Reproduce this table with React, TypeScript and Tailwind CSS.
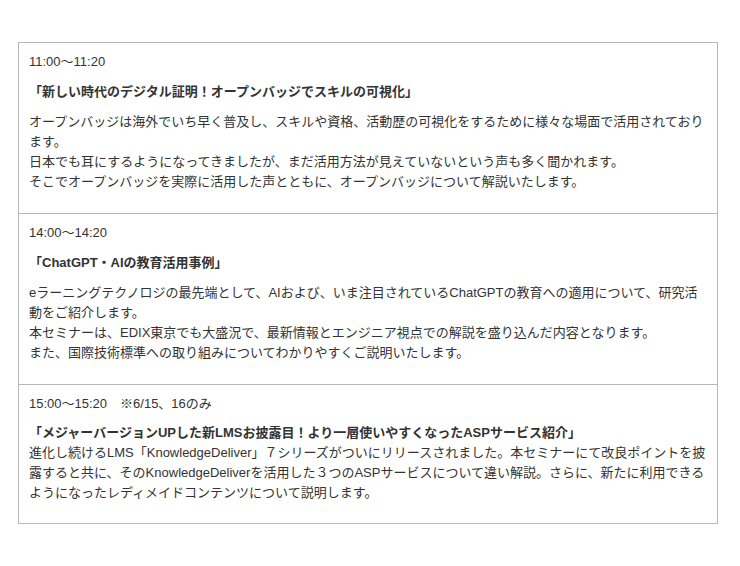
const sessions = [
  {
    time: "11:00〜11:20",
    title: "「新しい時代のデジタル証明！オープンバッジでスキルの可視化」",
    body: [
      "オープンバッジは海外でいち早く普及し、スキルや資格、活動歴の可視化をするために様々な場面で活用されております。",
      "日本でも耳にするようになってきましたが、まだ活用方法が見えていないという声も多く聞かれます。",
      "そこでオープンバッジを実際に活用した声とともに、オープンバッジについて解説いたします。",
    ],
    inline: false,
  },
  {
    time: "14:00〜14:20",
    title: "「ChatGPT・AIの教育活用事例」",
    body: [
      "eラーニングテクノロジの最先端として、AIおよび、いま注目されているChatGPTの教育への適用について、研究活動をご紹介します。",
      "本セミナーは、EDIX東京でも大盛況で、最新情報とエンジニア視点での解説を盛り込んだ内容となります。",
      "また、国際技術標準への取り組みについてわかりやすくご説明いたします。",
    ],
    inline: false,
  },
  {
    time: "15:00〜15:20　※6/15、16のみ",
    title: "「メジャーバージョンUPした新LMSお披露目！より一層使いやすくなったASPサービス紹介」",
    body: [
      "進化し続けるLMS「KnowledgeDeliver」７シリーズがついにリリースされました。本セミナーにて改良ポイントを披露すると共に、そのKnowledgeDeliverを活用した３つのASPサービスについて違い解説。さらに、新たに利用できるようになったレディメイドコンテンツについて説明します。",
    ],
    inline: true,
  },
];

export default function App() {
  return (
    <div
      className="min-h-[566px] w-[740px] bg-white pt-[42px] pl-[18px] text-[13px] leading-[20px] text-[#333]"
      style={{ fontFamily: '"Liberation Sans", "Noto Sans CJK JP", sans-serif' }}
    >
      <div className="w-[700px] border border-[#b8b8b8]">
        {sessions.map((s, i) => (
          <div
            key={s.time}
            className={`px-[10px] pt-[9px] ${i > 0 ? "border-t border-[#b8b8b8]" : ""} ${s.inline ? "pb-[10px]" : "pb-[11px]"}`}
          >
            <p className={s.inline ? "mb-[9px]" : "mb-[10px]"}>{s.time}</p>
            {s.inline ? (
              <p className="mb-[10px]">
                <span className="font-bold">{s.title}</span>
                <br />
                {s.body[0]}
              </p>
            ) : (
              <>
                <p className="mb-[10px] font-bold">{s.title}</p>
                <p className="mb-[10px]">
                  {s.body.map((line, j) => (
                    <span key={j}>
                      {line}
                      {j < s.body.length - 1 && <br />}
                    </span>
                  ))}
                </p>
              </>
            )}
          </div>
        ))}
      </div>
    </div>
  );
}
